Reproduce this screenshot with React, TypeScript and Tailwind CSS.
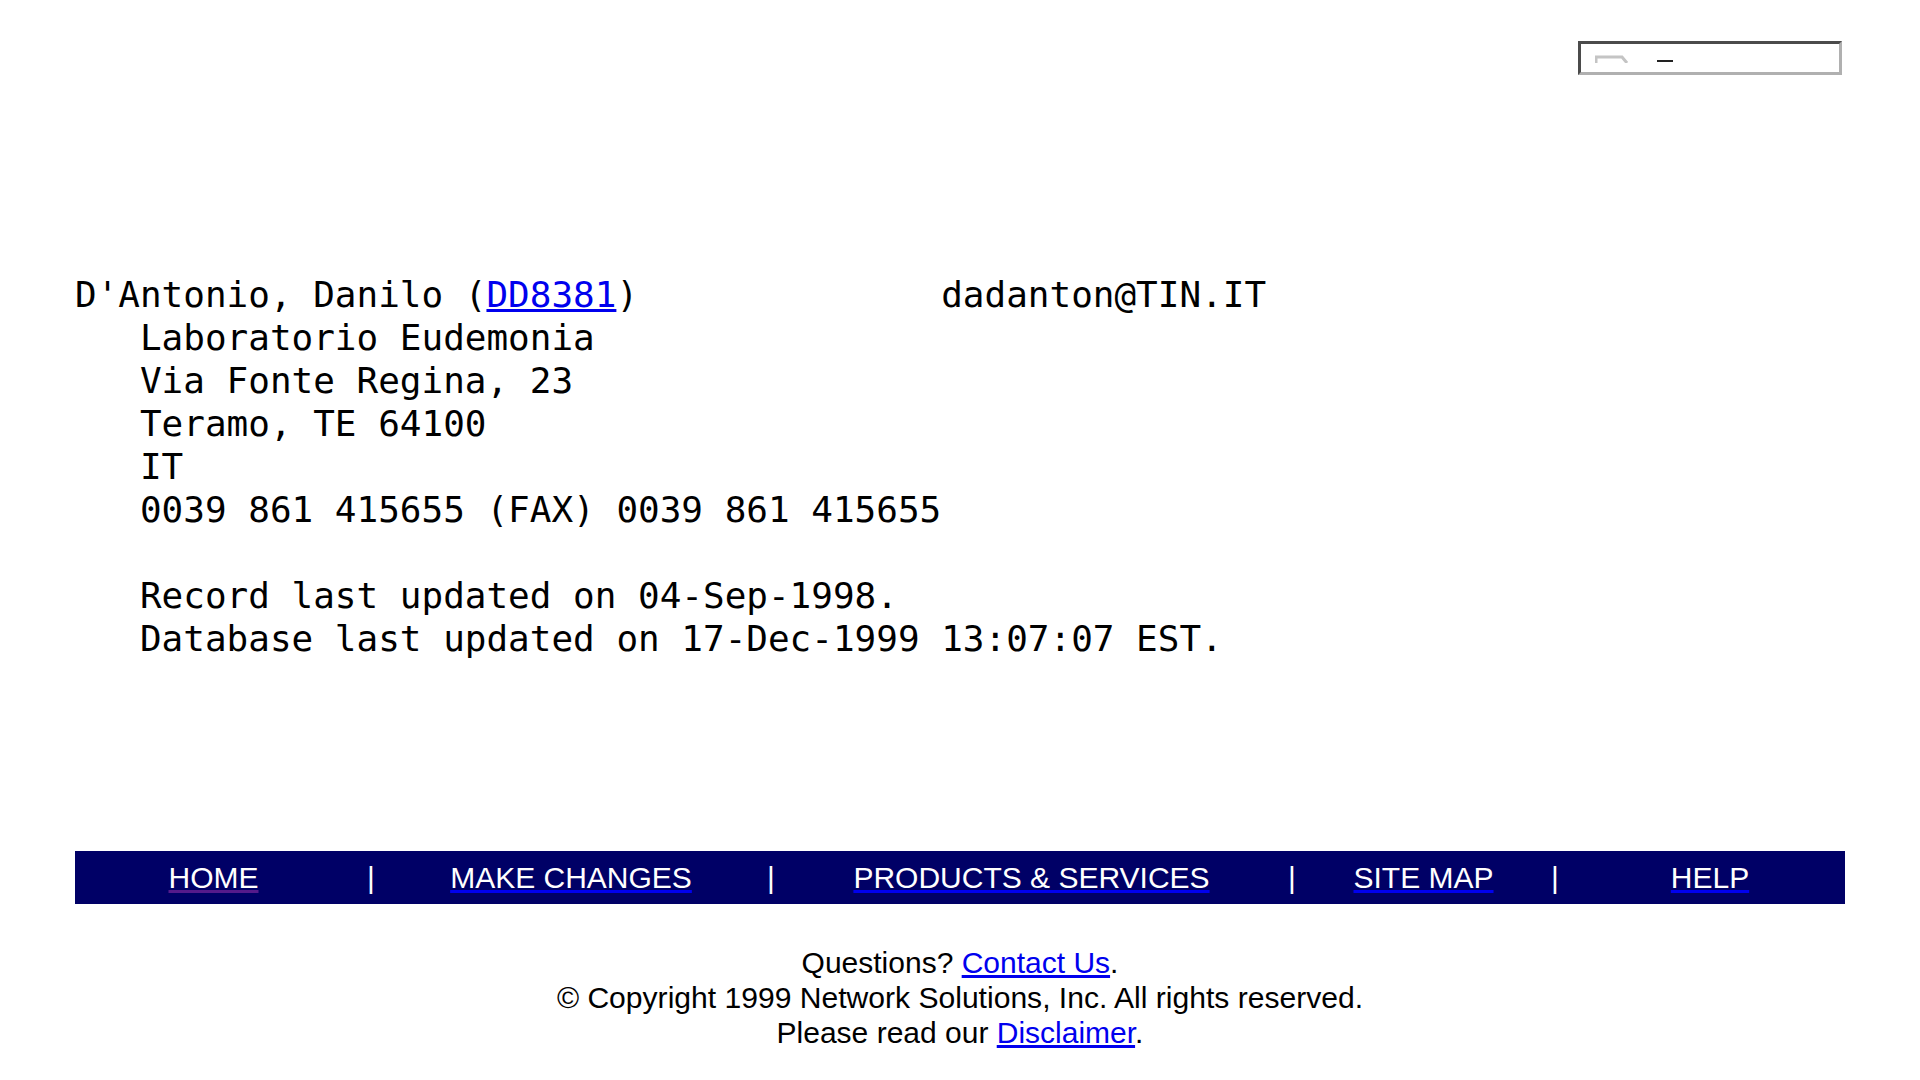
export default function App() {
  const mono = "font-['DejaVu_Sans_Mono',monospace]";
  const link = "text-[#0000ee] underline";
  const navLink = "text-white underline decoration-[#0000ee]";
  const pipe = "w-[6px] -ml-px mr-px text-center";
  return (
    <div className="w-[1920px] h-[1080px] bg-white overflow-hidden pl-[75px] pr-[75px] text-black font-['Liberation_Sans',sans-serif]">
      <div className="flex justify-end pt-[41px] h-[273px]">
        <div className="w-[264px] h-[34px] border-[3px] border-t-[#4b4b4b] border-l-[#4b4b4b] border-r-[#b0b0b0] border-b-[#b0b0b0] mr-[3px] flex items-start pl-[14px] pt-[11px] gap-[28px]">
          <svg width="34" height="8" viewBox="0 0 34 8" className="shrink-0"><path d="M1 8V2H27L32 8" fill="none" stroke="#c4c4c4" strokeWidth="3" /></svg>
          <div className="w-[16px] h-[2px] bg-[#222] mt-[5px] blur-[0.5px]" />
        </div>
      </div>
      <pre className={`${mono} text-[35.97px] leading-[43px] m-0`}>
        {"D'Antonio, Danilo ("}<a className={link}>DD8381</a>{")              dadanton@TIN.IT\n"}
        {"   Laboratorio Eudemonia\n   Via Fonte Regina, 23\n   Teramo, TE 64100\n   IT\n   0039 861 415655 (FAX) 0039 861 415655\n\n   Record last updated on 04-Sep-1998.\n   Database last updated on 17-Dec-1999 13:07:07 EST."}
      </pre>
      <div className="mt-[191px] h-[53px] bg-[#000066] text-white text-[30px] flex items-center">
        <div className="w-[277px] text-center"><a className="text-white underline decoration-[#551a8b]">HOME</a></div>
        <div className="w-[16px]" />
        <div className={pipe}>|</div>
        <div className="w-[394px] text-center"><a className={navLink}>MAKE CHANGES</a></div>
        <div className={pipe}>|</div>
        <div className="w-[515px] text-center"><a className={navLink}>PRODUCTS &amp; SERVICES</a></div>
        <div className={pipe}>|</div>
        <div className="w-[257px] text-center"><a className={navLink}>SITE MAP</a></div>
        <div className={pipe}>|</div>
        <div className="flex-1 text-center pl-[17px]"><a className={navLink}>HELP</a></div>
      </div>
      <div className="mt-[41px] text-center text-[30px] leading-[35px]">
        <div>Questions? <a className={link}>Contact Us</a>.</div>
        <div className="text-[30.08px]">© Copyright 1999 Network Solutions, Inc. All rights reserved.</div>
        <div>Please read our <a className={link}>Disclaimer</a>.</div>
      </div>
    </div>
  );
}
